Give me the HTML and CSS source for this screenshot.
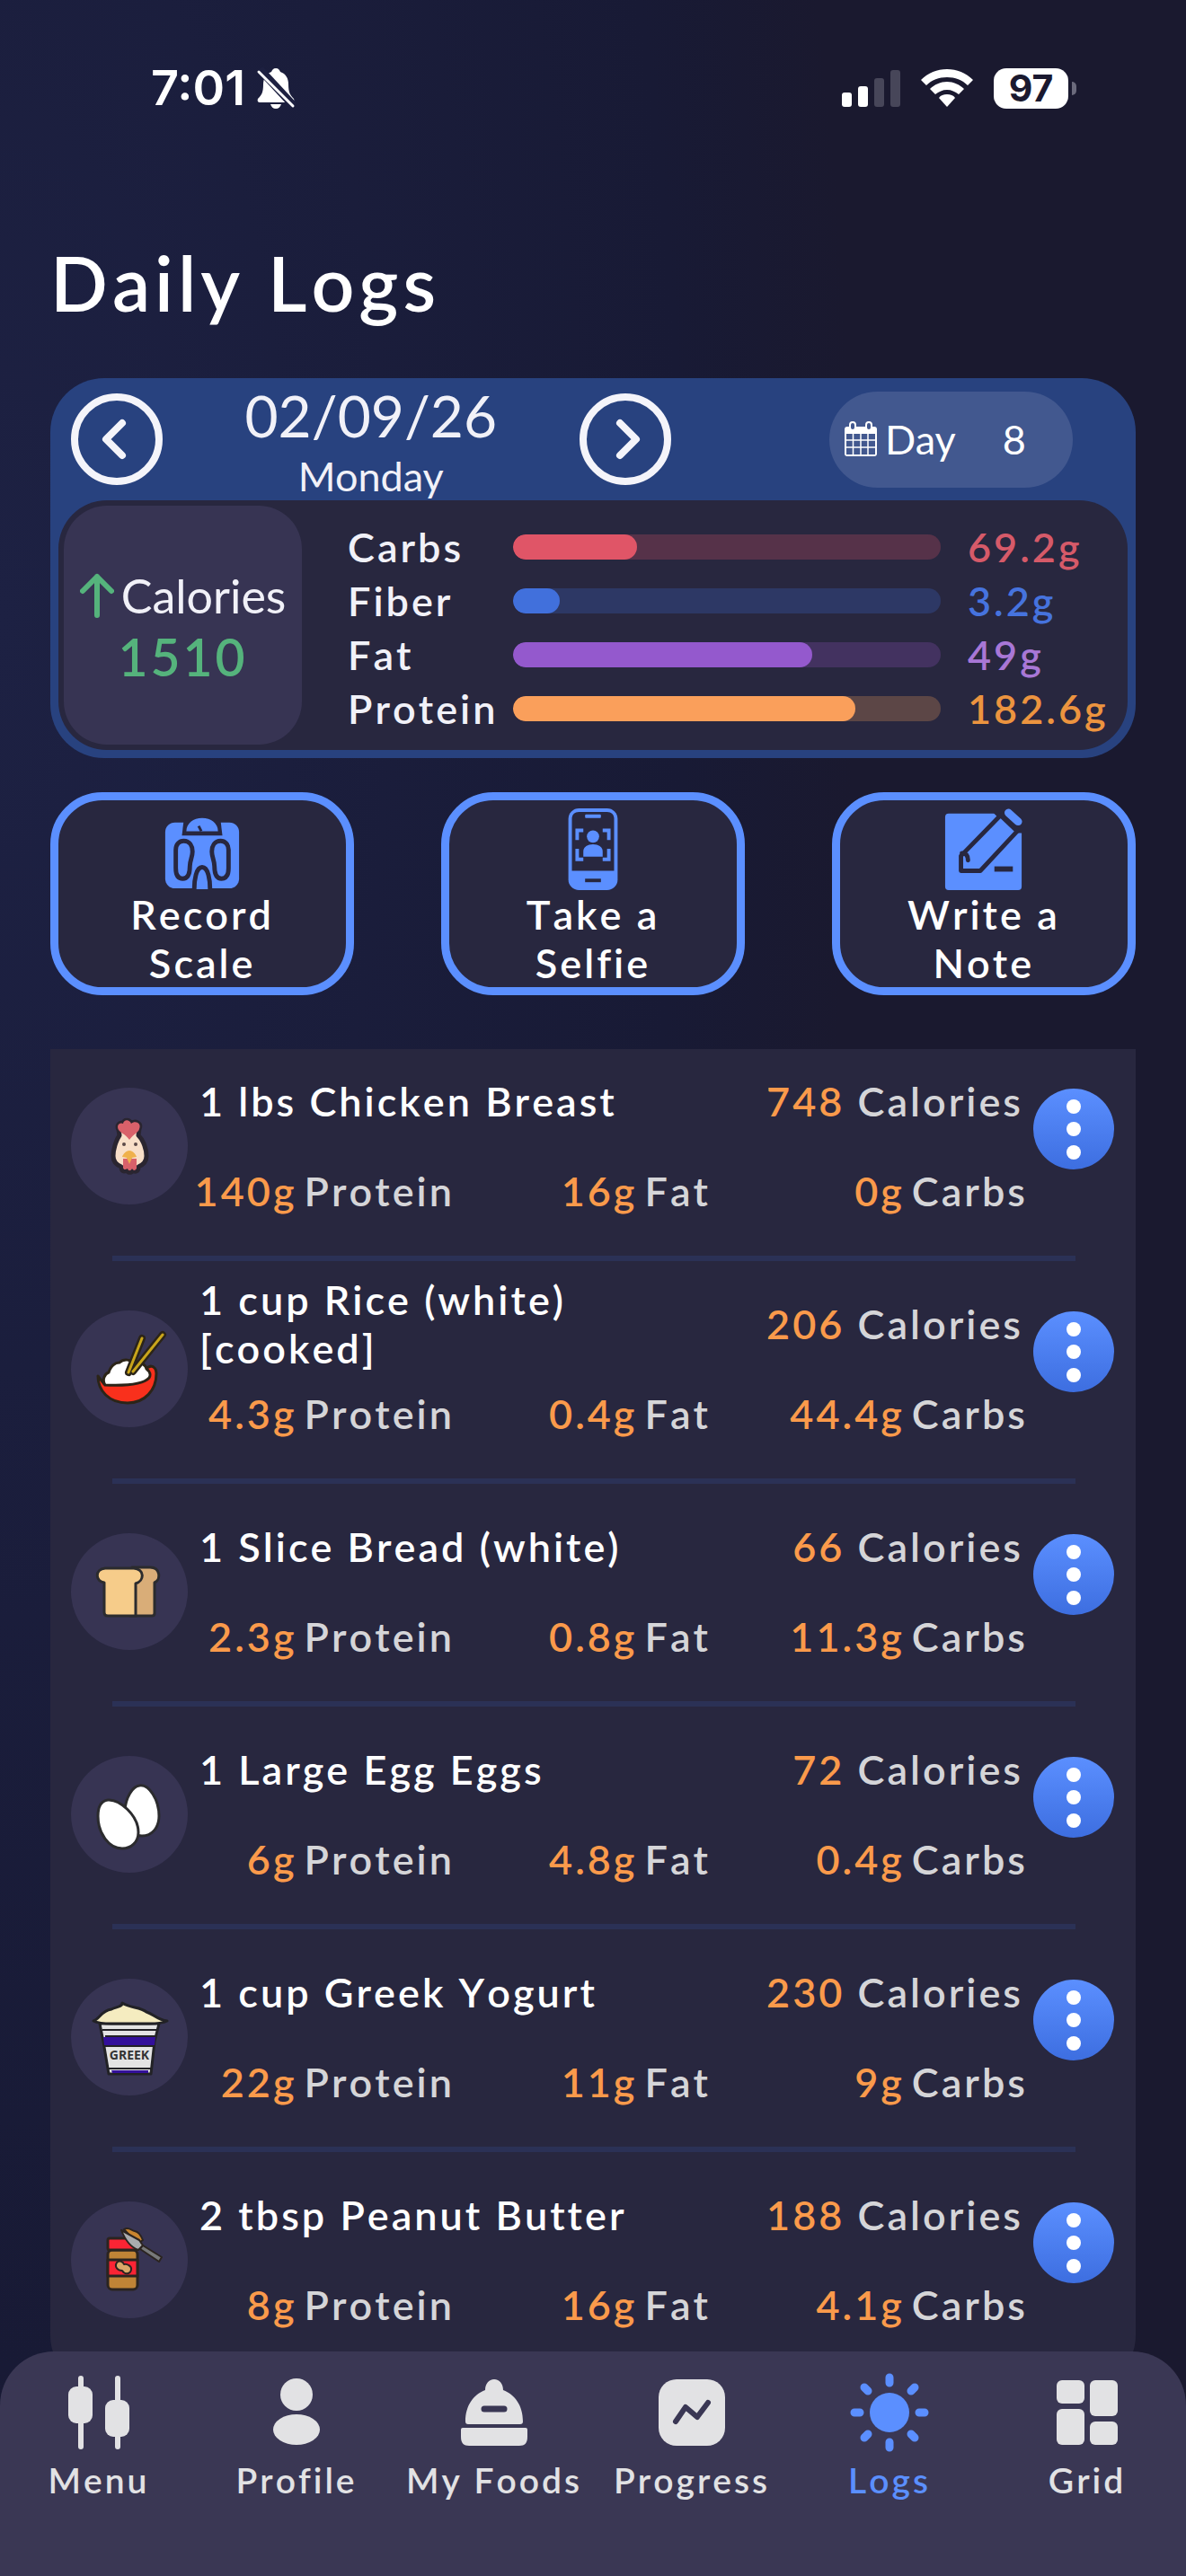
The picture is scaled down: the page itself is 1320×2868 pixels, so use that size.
FILE: index.html
```html
<!DOCTYPE html>
<html lang="en">
<head>
<meta charset="utf-8">
<meta name="viewport" content="width=device-width, initial-scale=1">
<title>Daily Logs</title>
<link rel="stylesheet" href="styles.css">
</head>
<body>
<div class="app">
  <header class="status">
    <div class="status-side">
      <span class="clock">7:01</span>
      <svg class="bell" viewBox="0 0 44 46" aria-hidden="true">
        <path d="M22 1c3 0 4 2 5 4 6 2 9 7 9 14 0 9 2 12 6 16 1 2 0 4-2 4H4c-2 0-3-2-2-4 4-4 6-7 6-16 0-7 3-12 9-14 1-2 2-4 5-4zM16 41h12c-1 3-3 5-6 5s-5-2-6-5z" fill="#fff"/>
        <path d="M4 2l38 41" stroke="#1d2040" stroke-width="9"/>
        <path d="M3 5l38 38" stroke="#fff" stroke-width="3" stroke-linecap="round"/>
      </svg>
    </div>
    <div class="status-side status-right">
      <svg class="signal" viewBox="0 0 65 42" aria-hidden="true">
        <rect x="0" y="26" width="11" height="16" rx="3" fill="#fff"/>
        <rect x="18" y="19" width="11" height="23" rx="3" fill="#fff"/>
        <rect x="36" y="10" width="11" height="32" rx="3" fill="#474659"/>
        <rect x="54" y="1" width="11" height="41" rx="3" fill="#474659"/>
      </svg>
      <svg class="wifi" viewBox="0 0 58 42" aria-hidden="true">
        <path d="M29 0C18 0 8 4 0 12l6 6c6-6 14-9 23-9s17 3 23 9l6-6C50 4 40 0 29 0z" fill="#fff"/>
        <path d="M29 14c-7 0-14 3-19 8l6 6c4-3 8-5 13-5s9 2 13 5l6-6c-5-5-12-8-19-8z" fill="#fff"/>
        <path d="M29 28c-4 0-7 1-9 4l9 10 9-10c-2-3-5-4-9-4z" fill="#fff"/>
      </svg>
      <div class="battery"><span class="battery-level">97</span><span class="battery-cap"></span></div>
    </div>
  </header>

  <main class="content">
    <h1 class="title">Daily Logs</h1>

    <section class="day-card" aria-label="Day summary">
      <div class="day-head">
        <div class="date-nav">
          <button class="round-btn" type="button" aria-label="Previous day">
            <svg viewBox="0 0 104 104" fill="none" stroke="#f4f4fa"><circle cx="52" cy="52" r="47" stroke-width="8"/><path d="M58 34L40 52l18 18" stroke-width="8" stroke-linecap="round" stroke-linejoin="round"/></svg>
          </button>
          <div class="date">
            <span class="date-value">02/09/26</span>
            <span class="date-name">Monday</span>
          </div>
          <button class="round-btn" type="button" aria-label="Next day">
            <svg viewBox="0 0 104 104" fill="none" stroke="#f4f4fa"><circle cx="52" cy="52" r="47" stroke-width="8"/><path d="M46 34l18 18-18 18" stroke-width="8" stroke-linecap="round" stroke-linejoin="round"/></svg>
          </button>
        </div>
        <button class="day-pill" type="button">
          <svg class="calendar" viewBox="0 0 38 40" aria-hidden="true">
            <rect x="1" y="6" width="36" height="33" rx="3" fill="#fff"/>
            <path d="M3 14h32v23H3z" fill="#42588f"/>
            <path d="M3 21h32M3 29h32M10.500 14v23M19 14v23M27 14v23" stroke="#fff" stroke-width="1.500"/>
            <rect x="7" y="1" width="6" height="9" rx="3" fill="#42588f" stroke="#fff" stroke-width="2"/>
            <rect x="25" y="1" width="6" height="9" rx="3" fill="#42588f" stroke="#fff" stroke-width="2"/>
          </svg>
          <span class="day-word">Day</span><span class="day-count">8</span>
        </button>
      </div>
      <div class="day-body">
        <div class="calories">
          <div class="calories-label">
            <svg class="arrow-up" viewBox="0 0 38 50" fill="none" stroke="#55b37c" stroke-width="6" stroke-linecap="round" stroke-linejoin="round" aria-hidden="true"><path d="M19 47V4M3 20L19 4l16 16"/></svg>
            <span>Calories</span>
          </div>
          <div class="calories-value">1510</div>
        </div>
        <div class="macros">
          <div class="macro carbs"><span class="macro-name">Carbs</span><div class="bar" role="progressbar" aria-label="Carbs" aria-valuenow="29"><div class="fill" style="width:29%"></div></div><span class="macro-value">69.2g</span></div>
          <div class="macro fiber"><span class="macro-name">Fiber</span><div class="bar" role="progressbar" aria-label="Fiber" aria-valuenow="11"><div class="fill" style="width:11%"></div></div><span class="macro-value">3.2g</span></div>
          <div class="macro fat"><span class="macro-name">Fat</span><div class="bar" role="progressbar" aria-label="Fat" aria-valuenow="70"><div class="fill" style="width:70%"></div></div><span class="macro-value">49g</span></div>
          <div class="macro protein"><span class="macro-name">Protein</span><div class="bar" role="progressbar" aria-label="Protein" aria-valuenow="80"><div class="fill" style="width:80%"></div></div><span class="macro-value">182.6g</span></div>
        </div>
      </div>
    </section>

    <div class="actions">
      <button class="action" type="button">
        <svg viewBox="0 0 94 93" aria-hidden="true">
          <rect x="5" y="16" width="84" height="75" rx="11" fill="#5b8fff"/>
          <path d="M26 14h42l2 17H24z" fill="#28273f"/>
          <path d="M29 26c0-9 8-15 18-15s18 6 18 15z" fill="#5b8fff"/>
          <path d="M43 20l3 6" stroke="#28273f" stroke-width="3"/>
          <g fill="#5b8fff" stroke="#28273f" stroke-width="5">
            <path d="M17 47c0-6 4-10 9-10 7 0 10 6 10 12 0 7-3 10-3 17 0 9-2 14-8 14s-8-5-8-12z"/>
            <path d="M77 47c0-6-4-10-9-10-7 0-10 6-10 12 0 7 3 10 3 17 0 9 2 14 8 14s8-5 8-12z"/>
            <path d="M38 92c0-10 2-25 9-25s9 15 9 25"/>
          </g>
        </svg>
        <span>Record<br>Scale</span>
      </button>
      <button class="action" type="button">
        <svg viewBox="0 0 94 93" aria-hidden="true">
          <rect x="19" y="0" width="56" height="93" rx="12" fill="#5b8fff"/>
          <path d="M31 4h32c5 0 8 3 8 8v59H23V12c0-5 3-8 8-8z" fill="#28273f"/>
          <rect x="38" y="7" width="18" height="4" rx="1" fill="#5b8fff"/>
          <circle cx="47" cy="32" r="7" fill="#5b8fff"/>
          <path d="M36 55v-6c0-5 5-8 11-8s11 3 11 8v6z" fill="#5b8fff"/>
          <path d="M36 25h-7v11M58 25h7v11M36 58h-7V46M58 58h7V46" fill="none" stroke="#5b8fff" stroke-width="4"/>
          <rect x="38" y="80" width="18" height="4" fill="#28273f"/>
        </svg>
        <span>Take a<br>Selfie</span>
      </button>
      <button class="action" type="button">
        <svg viewBox="0 0 94 93" aria-hidden="true">
          <path d="M7 6h60l23 18v65q0 4-4 4H7q-4 0-4-4V10q0-4 4-4z" fill="#5b8fff"/>
          <path d="M57 4h36v24H80z" fill="#28273f"/>
          <path d="M21 54L66 8l19 18-42 45H21z" fill="#5b8fff" stroke="#28273f" stroke-width="5" stroke-linejoin="round"/>
          <path d="M22 51c5 0 7 3 7 8" fill="none" stroke="#28273f" stroke-width="5" stroke-linecap="round"/>
          <path d="M75 5l11 10" stroke="#5b8fff" stroke-width="9" stroke-linecap="round"/>
          <path d="M59 69h21" stroke="#28273f" stroke-width="6"/>
        </svg>
        <span>Write a<br>Note</span>
      </button>
    </div>

    <ul class="log">
      <li class="entry">
        <div class="food-icon"><svg viewBox="0 0 130 130" aria-hidden="true">
          <g stroke="#2a2530" stroke-width="5" stroke-linejoin="round"><path d="M53 47c-3-6 2-9 5-7 1-5 7-5 9 0 4-4 12-1 9 6l-1 7c6 6 9 16 9 23 0 6-4 10-9 12 0 6-4 6-6 4-2 3-5 3-7 0-3 2-6 1-6-4-5-2-9-6-9-12 0-7 3-17 7-23z" fill="#f8dfc8"/></g>
          <path d="M53 47c-3-6 2-9 5-7 1-5 7-5 9 0 4-4 12-1 9 6-1 4-6 5-11 12-5-7-9-7-12-11z" fill="#d9616a"/>
          <circle cx="59" cy="63" r="2" fill="#5b4a48"/><circle cx="72" cy="63" r="2" fill="#5b4a48"/>
          <path d="M58 79h15v11c-2 3-4 2-5 0-2 3-4 3-5 0-3 2-5 1-5-2z" fill="#d9616a"/>
          <path d="M65 70c4 0 7 4 8 7l-5 1-3 7-3-7-5-1c1-3 4-7 8-7z" fill="#efb14c"/>
        </svg></div>
        <div class="entry-main">
          <div class="entry-top"><span class="name">1 lbs Chicken Breast</span><span class="kcal"><b>748</b> Calories</span></div>
          <div class="entry-macros"><span><b>140g</b>Protein</span><span><b>16g</b>Fat</span><span><b>0g</b>Carbs</span></div>
        </div>
        <button class="more" type="button" aria-label="More options"><svg viewBox="0 0 90 90" fill="#fff"><circle cx="45" cy="20" r="8"/><circle cx="45" cy="45" r="8"/><circle cx="45" cy="71" r="8"/></svg></button>
      </li>
      <li class="entry">
        <div class="food-icon"><svg viewBox="0 0 130 130" aria-hidden="true">
          <path d="M30 73c0 16 12 30 33 30 19 0 32-14 32-33 0-5-3-8-6-8L37 82z" fill="#f9301c" stroke="#2b2418" stroke-width="3" stroke-linejoin="round"/>
          <path d="M38 83c-4-6 0-13 4-14 2-7 7-11 12-11 5-5 13-3 16 1 8-3 13 2 14 6 4 3 5 7 3 10-6 7-25 9-49 8z" fill="#fff" stroke="#2b2418" stroke-width="3"/>
          <g stroke-linecap="round"><path d="M64 69l15-38M69 68l33-41" stroke="#2b2418" stroke-width="8"/><path d="M64 69l15-38M69 68l33-41" stroke="#c9a51b" stroke-width="3"/></g>
        </svg></div>
        <div class="entry-main">
          <div class="entry-top"><span class="name">1 cup Rice (white) [cooked]</span><span class="kcal"><b>206</b> Calories</span></div>
          <div class="entry-macros"><span><b>4.3g</b>Protein</span><span><b>0.4g</b>Fat</span><span><b>44.4g</b>Carbs</span></div>
        </div>
        <button class="more" type="button" aria-label="More options"><svg viewBox="0 0 90 90" fill="#fff"><circle cx="45" cy="20" r="8"/><circle cx="45" cy="45" r="8"/><circle cx="45" cy="71" r="8"/></svg></button>
      </li>
      <li class="entry">
        <div class="food-icon"><svg viewBox="0 0 130 130" aria-hidden="true">
          <g stroke="#2b2b2e" stroke-width="3" stroke-linejoin="round">
            <path d="M68 38h20c12 0 12 14 5 17v34q0 3-3 3H66z" fill="#d9ad78"/>
            <path d="M38 39h32c12 1 12 14 2 17v36H41q-4 0-4-4V55c-10-1-11-15 1-16z" fill="#f6cc8a"/>
          </g>
        </svg></div>
        <div class="entry-main">
          <div class="entry-top"><span class="name">1 Slice Bread (white)</span><span class="kcal"><b>66</b> Calories</span></div>
          <div class="entry-macros"><span><b>2.3g</b>Protein</span><span><b>0.8g</b>Fat</span><span><b>11.3g</b>Carbs</span></div>
        </div>
        <button class="more" type="button" aria-label="More options"><svg viewBox="0 0 90 90" fill="#fff"><circle cx="45" cy="20" r="8"/><circle cx="45" cy="45" r="8"/><circle cx="45" cy="71" r="8"/></svg></button>
      </li>
      <li class="entry">
        <div class="food-icon"><svg viewBox="0 0 130 130" aria-hidden="true">
          <g fill="#fff" stroke="#2b2b2e" stroke-width="3">
            <path d="M76 33c11-2 22 16 22 34 0 13-8 22-19 22-13 0-20-14-19-29 1-13 8-26 16-27z"/>
            <path d="M41 49c13-1 34 17 34 36 0 11-8 18-18 18-15 0-27-17-27-36 0-11 4-17 11-18z"/>
          </g>
        </svg></div>
        <div class="entry-main">
          <div class="entry-top"><span class="name">1 Large Egg Eggs</span><span class="kcal"><b>72</b> Calories</span></div>
          <div class="entry-macros"><span><b>6g</b>Protein</span><span><b>4.8g</b>Fat</span><span><b>0.4g</b>Carbs</span></div>
        </div>
        <button class="more" type="button" aria-label="More options"><svg viewBox="0 0 90 90" fill="#fff"><circle cx="45" cy="20" r="8"/><circle cx="45" cy="45" r="8"/><circle cx="45" cy="71" r="8"/></svg></button>
      </li>
      <li class="entry">
        <div class="food-icon"><svg viewBox="0 0 130 130" aria-hidden="true">
          <path d="M32 50h66l-5 20-4 36H42l-6-36z" fill="#e4e4e4" stroke="#222226" stroke-width="3" stroke-linejoin="round"/>
          <path d="M25 47c6-1 9-12 20-13 5-3 12-2 12-7 9 6 20 4 27 10 9 3 12 9 23 10-6 3-14 3-20 3H45c-8 0-14 0-20-3z" fill="#f5ecc0" stroke="#222226" stroke-width="3" stroke-linejoin="round"/>
          <path d="M35 57h61M38 64h56" stroke="#222226" stroke-width="2"/>
          <path d="M36 65h58l-1 9H37z" fill="#33109a"/>
          <path d="M38 75h54M42 100h47" stroke="#222226" stroke-width="2"/>
          <path d="M45 102h41v3H46z" fill="#33109a"/>
          <text x="65" y="90" text-anchor="middle" class="tub-text">GREEK</text>
        </svg></div>
        <div class="entry-main">
          <div class="entry-top"><span class="name">1 cup Greek Yogurt</span><span class="kcal"><b>230</b> Calories</span></div>
          <div class="entry-macros"><span><b>22g</b>Protein</span><span><b>11g</b>Fat</span><span><b>9g</b>Carbs</span></div>
        </div>
        <button class="more" type="button" aria-label="More options"><svg viewBox="0 0 90 90" fill="#fff"><circle cx="45" cy="20" r="8"/><circle cx="45" cy="45" r="8"/><circle cx="45" cy="71" r="8"/></svg></button>
      </li>
      <li class="entry">
        <div class="food-icon"><svg viewBox="0 0 130 130" aria-hidden="true">
          <g stroke="#2b2420" stroke-width="3" stroke-linejoin="round">
            <rect x="41" y="54" width="33" height="44" rx="5" fill="#c08436"/>
            <rect x="41" y="41" width="33" height="13" rx="2" fill="#fb2434"/>
            <path d="M41 65h33v18H41z" fill="#fb2434"/>
            <path d="M59 31c5-3 8 1 12 2 5 1 7 5 9 10l-6 4z" fill="#c9852f" stroke-width="2"/>
            <path d="M56 32l20 11 4 6-5 5c-9-3-15-12-19-22z" fill="#a9abae" stroke-width="2"/>
            <path d="M80 49l21 13-3 5-21-14z" fill="#77797a" stroke-width="2"/>
            <path d="M51 68c3-3 7-1 8 2 3-1 9 2 8 6-1 5-7 6-10 1-5 0-9-4-6-9z" fill="#d9a868" stroke-width="2"/>
          </g>
        </svg></div>
        <div class="entry-main">
          <div class="entry-top"><span class="name">2 tbsp Peanut Butter</span><span class="kcal"><b>188</b> Calories</span></div>
          <div class="entry-macros"><span><b>8g</b>Protein</span><span><b>16g</b>Fat</span><span><b>4.1g</b>Carbs</span></div>
        </div>
        <button class="more" type="button" aria-label="More options"><svg viewBox="0 0 90 90" fill="#fff"><circle cx="45" cy="20" r="8"/><circle cx="45" cy="45" r="8"/><circle cx="45" cy="71" r="8"/></svg></button>
      </li>
    </ul>
  </main>

  <nav class="tabs" aria-label="Main">
    <a class="tab" href="#menu">
      <svg viewBox="0 0 90 90" fill="currentColor" aria-hidden="true"><path d="M25 8v76M66 8v76" stroke="currentColor" stroke-width="6" stroke-linecap="round"/><rect x="11" y="17" width="27" height="41" rx="9"/><rect x="52" y="32" width="27" height="41" rx="9"/></svg>
      <span>Menu</span></a>
    <a class="tab" href="#profile">
      <svg viewBox="0 0 90 90" fill="currentColor" aria-hidden="true"><circle cx="45" cy="26" r="18"/><ellipse cx="45" cy="65" rx="26" ry="17"/></svg>
      <span>Profile</span></a>
    <a class="tab" href="#foods">
      <svg viewBox="0 0 90 90" fill="currentColor" aria-hidden="true"><path d="M13 56C13 38 22 26 35 21c0-7 4-12 10-12s10 5 10 12c13 5 22 17 22 35 0 2-1 3-3 3H16c-2 0-3-1-3-3z"/><path d="M34 42h22" stroke="#3a3754" stroke-width="7" stroke-linecap="round"/><path d="M10 63h70q2 0 2 2v8c0 7-3 10-9 10H17c-6 0-9-3-9-10v-8q0-2 2-2z"/></svg>
      <span>My Foods</span></a>
    <a class="tab" href="#progress">
      <svg viewBox="0 0 90 90" fill="currentColor" aria-hidden="true"><rect x="8" y="9" width="74" height="74" rx="20"/><path d="M27 56l11-16 13 11 12-16" fill="none" stroke="#3a3754" stroke-width="6" stroke-linecap="round" stroke-linejoin="round"/></svg>
      <span>Progress</span></a>
    <a class="tab active" href="#logs" aria-current="page">
      <svg viewBox="0 0 90 90" fill="currentColor" aria-hidden="true"><circle cx="45" cy="46" r="22"/><path d="M45 7v6M45 79v6M6 46h6M78 46h6M17 18l4 4M73 18l-4 4M17 74l4-4M73 74l-4-4" stroke="currentColor" stroke-width="9" stroke-linecap="round"/></svg>
      <span>Logs</span></a>
    <a class="tab" href="#grid">
      <svg viewBox="0 0 90 90" fill="currentColor" aria-hidden="true"><rect x="11" y="10" width="31" height="26" rx="6"/><rect x="11" y="42" width="31" height="40" rx="6"/><rect x="48" y="10" width="31" height="40" rx="6"/><rect x="48" y="56" width="31" height="26" rx="6"/></svg>
      <span>Grid</span></a>
  </nav>
</div>
</body>
</html>
```
FILE: styles.css
```css
* { box-sizing: border-box; }

body {
  margin: 0;
  background: #1a192f;
  color: #fff;
  font-family: Lato, "Liberation Sans", sans-serif;
  font-size: 45px;
  line-height: 54px;
}

button {
  margin: 0;
  padding: 0;
  border: 0;
  background: none;
  color: inherit;
  font: inherit;
  cursor: pointer;
}

svg { display: block; }

.app {
  display: flex;
  flex-direction: column;
  min-height: 100vh;
  background: radial-gradient(ellipse 72% 85% at 0 24%, #1d2143, #181a35 80%, #1a192f);
}

/* Status bar */
.status {
  display: flex;
  justify-content: space-between;
  align-items: center;
  height: 196px;
  padding: 0 122px 0 168px;
  font-family: Inter, "Liberation Sans", sans-serif;
}
.status-side { display: flex; align-items: center; gap: 12px; }
.status-right { gap: 23px; }
.clock { font-size: 54px; font-weight: 600; }
.bell { width: 44px; height: 46px; }
.signal { width: 65px; height: 42px; }
.wifi { width: 58px; height: 42px; }
.battery { display: flex; align-items: center; gap: 4px; }
.battery-level {
  width: 83px;
  height: 45px;
  border-radius: 14px;
  background: #fff;
  color: #1a192f;
  font-size: 41px;
  font-weight: 700;
  line-height: 45px;
  text-align: center;
}
.battery-cap {
  width: 5px;
  height: 15px;
  border-radius: 0 5px 5px 0;
  background: #6b6a7c;
}

/* Page */
.content { flex: 1 0 auto; padding: 68px 56px 0; }
.title {
  margin: 0 0 56px;
  font-size: 84px;
  font-weight: 600;
  font-kerning: none;
  line-height: 101px;
  letter-spacing: 5px;
}

/* Day summary */
.day-card {
  padding: 0 9px 9px;
  border-radius: 60px;
  background: #28427f;
  color: #f1f1f8;
}
.day-head {
  display: flex;
  justify-content: space-between;
  align-items: center;
  padding: 0 61px 0 13px;
}
.date-nav { display: flex; align-items: center; flex: 0 0 60%; }
.round-btn { flex: none; width: 104px; height: 104px; }
.date {
  flex: 1;
  display: flex;
  flex-direction: column;
  align-items: center;
  padding-top: 2px;
}
.date-value { font-size: 64px; line-height: 80px; }
.day-pill {
  display: flex;
  align-items: center;
  width: 271px;
  height: 107px;
  padding: 0 0 0 16px;
  border-radius: 54px;
  background: #42588f;
  color: #fff;
}
.calendar { width: 38px; height: 40px; margin-right: 8px; }
.day-count { margin: 0 auto; }

.day-body {
  display: flex;
  padding: 6px;
  border-radius: 54px;
  background: #28273f;
}
.calories {
  display: flex;
  flex-direction: column;
  align-items: center;
  flex: 0 0 265px;
  padding: 67px 0 63px;
  border-radius: 48px;
  background: #373453;
}
.calories-label {
  display: flex;
  align-items: center;
  gap: 8px;
  font-size: 52px;
  line-height: 66px;
}
.arrow-up { width: 38px; height: 50px; }
.calories-value {
  color: #55b37c;
  font-size: 57px;
  font-weight: 600;
  line-height: 70px;
  letter-spacing: 3px;
}
.macros {
  flex: 1;
  display: grid;
  gap: 4px;
  padding: 18px 0 12px 51px;
}
.macro {
  display: grid;
  grid-template-columns: 184px 1fr 172px;
  align-items: center;
  height: 56px;
  font-weight: 600;
  font-kerning: none;
  letter-spacing: 3px;
}
.bar { height: 28px; border-radius: 14px; margin-right: 30px; overflow: hidden; }
.fill { height: 100%; border-radius: 14px; }
.carbs .bar { background: #563249; }
.carbs .fill { background: #e05567; }
.carbs .macro-value { color: #d65a69; }
.fiber .bar { background: #2d3865; }
.fiber .fill { background: #4170dc; }
.fiber .macro-value { color: #4673de; }
.fat .bar { background: #433260; }
.fat .fill { background: #9459cd; }
.fat .macro-value { color: #a877d6; }
.protein .bar { background: #5c4646; }
.protein .fill { background: #fa9f5b; }
.protein .macro-value { color: #ec943f; }

/* Quick actions */
.actions {
  display: flex;
  justify-content: space-between;
  margin: 38px 0 60px;
}
.action {
  display: flex;
  flex-direction: column;
  align-items: center;
  width: 28%;
  padding: 9px 0 0;
  border: 9px solid #5b8fff;
  border-radius: 58px;
  background: #28273f;
  font-weight: 600;
  font-kerning: none;
  letter-spacing: 3px;
}
.action svg { width: 94px; height: 91px; }

/* Food log */
.log {
  margin: 0;
  padding: 4px 24px 0 23px;
  border-radius: 0 0 60px 60px;
  background: #28273f;
  list-style: none;
}
.entry {
  display: grid;
  grid-template-columns: 130px 1fr 90px;
  font-weight: 600;
  font-kerning: none;
  letter-spacing: 3px;
}
.entry::after {
  content: "";
  grid-column: 1 / -1;
  height: 6px;
  margin: 0 43px 16px 46px;
  background: #2b3156;
}
.food-icon {
  width: 130px;
  height: 130px;
  margin-top: 39px;
  border-radius: 50%;
  background: #373453;
}
.tub-text {
  fill: #333;
  font-family: "Noto Sans", sans-serif;
  font-size: 14px;
  font-weight: 700;
  letter-spacing: 0;
}
.entry-main { padding-bottom: 45px; }
.entry-top {
  display: flex;
  justify-content: space-between;
  align-items: center;
  height: 108px;
  margin-bottom: 19px;
  padding: 0 11px 0 13px;
}
.name { max-width: 480px; }
.kcal { color: #d5d5d8; white-space: nowrap; }
.entry-macros {
  display: grid;
  grid-template-columns: 297fr 285fr 353fr;
  color: #d5d5d8;
  white-space: nowrap;
  margin-right: 6px;
}
.entry-macros span {
  display: flex;
  justify-content: flex-end;
  gap: 8px;
}
.entry b { color: #fa9a4b; font-weight: 600; }
.more {
  width: 90px;
  height: 90px;
  margin-top: 40px;
  border-radius: 50%;
  background: linear-gradient(#5b8fff, #3d6ee0);
}

/* Tab bar */
.tabs {
  position: sticky;
  bottom: 0;
  display: grid;
  grid-template-columns: repeat(6, 1fr);
  height: 250px;
  margin-top: -42px;
  padding-top: 22px;
  border-radius: 60px 60px 0 0;
  background: #3a3754;
}
.tab {
  display: flex;
  flex-direction: column;
  align-items: center;
  gap: 8px;
  color: #e2e2e4;
  font-size: 39px;
  font-weight: 600;
  font-kerning: none;
  line-height: 47px;
  letter-spacing: 3px;
  text-decoration: none;
  white-space: nowrap;
}
.tab svg { width: 90px; height: 90px; }
.tab.active { color: #5b8fff; }
```
